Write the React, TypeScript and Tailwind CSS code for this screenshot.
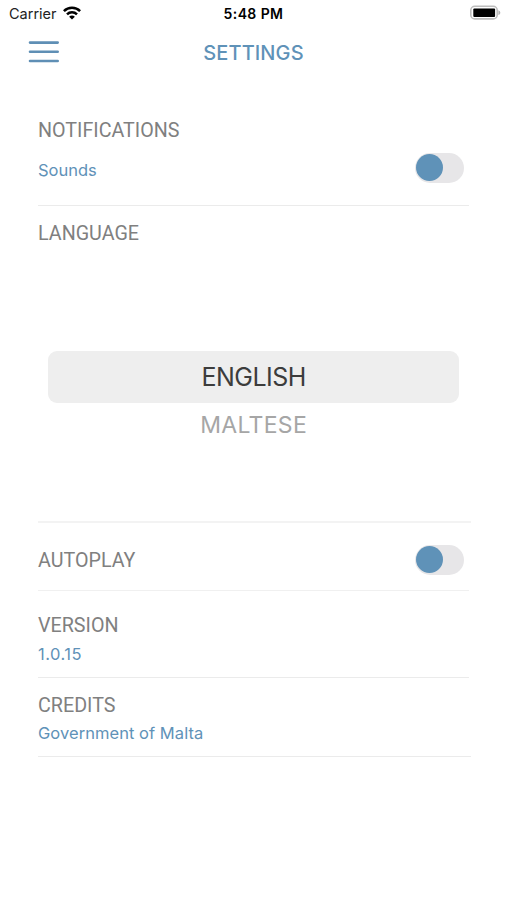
import React, { useState } from 'react';

interface ToggleProps {
  label: string;
  checked: boolean;
  onChange: (value: boolean) => void;
}

const Toggle: React.FC<ToggleProps> = ({ label, checked, onChange }) => (
  <button
    type="button"
    role="switch"
    aria-checked={checked}
    aria-label={label}
    onClick={() => onChange(!checked)}
    className={`flex h-[30px] w-[49px] items-center rounded-full bg-[#e7e6e8] px-px pb-px ${checked ? 'justify-end' : 'justify-start'}`}
  >
    <span className="h-[27px] w-[27px] rounded-full bg-[#5f92b8]" />
  </button>
);

const StatusBar: React.FC = () => (
  <div className="grid h-[26px] grid-cols-3 items-center pl-[9px] pr-[6px] font-['Inter',sans-serif] text-black">
    <div className="flex items-center gap-[6px]">
      <span className="pt-[2px] text-[14.5px] leading-none text-[#222]">Carrier</span>
      <svg width="18" height="14" viewBox="0 0 18 14" fill="none" stroke="black" strokeWidth="2.5">
        <path d="M0.9 5.2C5.4 0.7 12.6 0.7 17.1 5.2" />
        <path d="M4 8.4C6.8 5.6 11.2 5.6 14 8.4" />
        <path d="M9 13.6L6.1 10.7C7.7 9.2 10.3 9.2 11.9 10.7Z" fill="black" stroke="none" />
      </svg>
    </div>
    <span className="-ml-[3px] whitespace-nowrap pt-px text-center text-[14px] font-semibold leading-none tracking-[0.4px]">5:48 PM</span>
    <svg className="justify-self-end" width="31" height="16" viewBox="0 0 31 16">
      <rect x="0.8" y="1.3" width="26.4" height="12.6" rx="4" fill="white" stroke="#bdbdbd" strokeWidth="1.6" />
      <rect x="3.3" y="3.4" width="21.8" height="8.6" rx="1" fill="black" />
      <path d="M28.4 5.2C30.9 6 30.9 9.2 28.4 10Z" fill="#b0b0b0" />
    </svg>
  </div>
);

const heading = 'pt-px text-[19.7px] leading-6 text-[#808080]';
const detail = "font-['Inter',sans-serif] text-[16.5px] leading-5 text-[#5f92b8]";

const App: React.FC = () => {
  const [sounds, setSounds] = useState(false);
  const [autoplay, setAutoplay] = useState(false);

  return (
    <div className="min-h-[900px] w-[507px] bg-white font-['Roboto',sans-serif]">
      <StatusBar />

      <header className="grid h-[52px] grid-cols-3 items-center px-[28px]">
        <button type="button" aria-label="Menu" className="w-[31px]">
          <svg width="31" height="22" viewBox="0 0 31 22" stroke="#5f8fb5" strokeWidth="2.6" strokeLinecap="round">
            <path d="M2 1.6H29.7M2 10.8H29.7M2 20H29.7" />
          </svg>
        </button>
        <h1 className="pt-[2px] text-center font-['Inter',sans-serif] text-[20px] font-medium leading-6 tracking-[0.1px] text-[#5f92b8]">SETTINGS</h1>
      </header>

      <main className="pl-[38px] pr-[38px]">
        {/* Notifications */}
        <section className="h-[128px] border-b border-[#ebebeb] pt-10">
          <h2 className={heading}>NOTIFICATIONS</h2>
          <div className="mt-[10px] flex items-start justify-between pr-[5px]">
            <span className={`mt-[7px] ${detail}`}>Sounds</span>
            <Toggle label="Sounds" checked={sounds} onChange={setSounds} />
          </div>
        </section>

        {/* Language picker */}
        <section className="-mr-[2px] h-[317px] border-b-2 border-[#f3f3f3] pt-[15px]">
          <h2 className={heading}>LANGUAGE</h2>
          <div className="ml-[10.4px] mr-[12.1px] mt-[105px] text-center font-['Inter',sans-serif]">
            <div className="flex h-[52px] items-center justify-center rounded-[9px] bg-[#eee] pt-[2px] text-[25px] tracking-[-0.5px] text-[#3c3c3c]">ENGLISH</div>
            <div className="mt-[7px] text-[23px] leading-[30px] tracking-[0.3px] text-[#a6a6a6]">MALTESE</div>
          </div>
        </section>

        {/* Autoplay */}
        <section className="flex h-[68px] items-center justify-between border-b border-[#f0f0f0] pr-[5px] pt-[7px]">
          <h2 className={heading}>AUTOPLAY</h2>
          <Toggle label="Autoplay" checked={autoplay} onChange={setAutoplay} />
        </section>

        {/* Version */}
        <section className="h-[87px] border-b border-[#ebebeb] pt-[22px]">
          <h2 className={heading}>VERSION</h2>
          <p className={`mt-[6px] tracking-[0.5px] ${detail}`}>1.0.15</p>
        </section>

        {/* Credits */}
        <section className="-mr-[2px] h-[79px] border-b border-[#ebebeb] pt-[15px]">
          <h2 className={heading}>CREDITS</h2>
          <p className={`mt-[5px] tracking-[0.05px] ${detail}`}>Government of Malta</p>
        </section>
      </main>
    </div>
  );
};

export default App;
